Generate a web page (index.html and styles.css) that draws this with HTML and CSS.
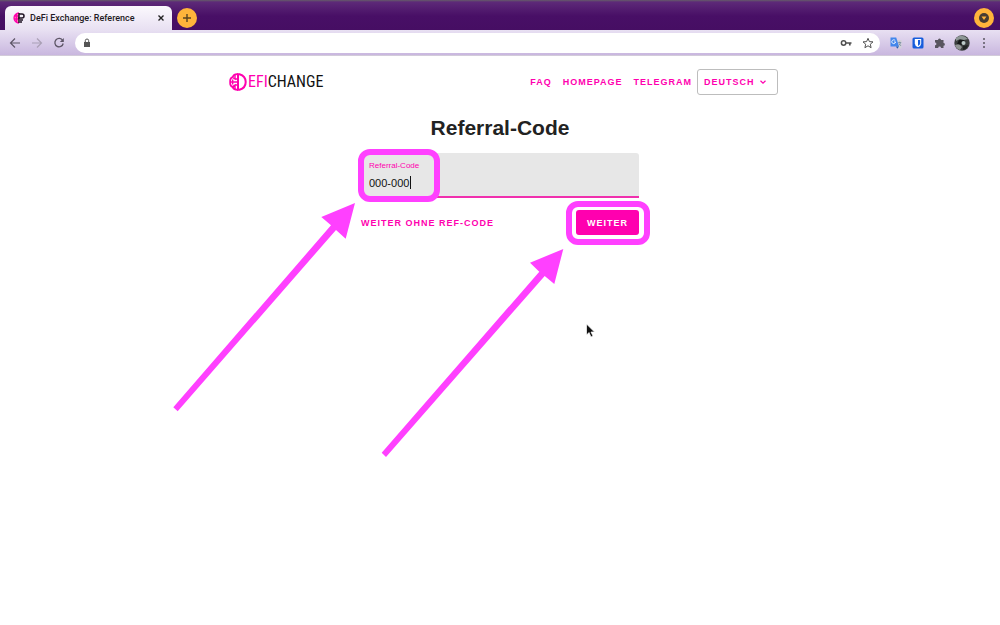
FILE: index.html
```html
<!DOCTYPE html>
<html lang="de">
<head>
<meta charset="utf-8">
<title>DeFi Exchange: Reference</title>
<link rel="stylesheet" href="styles.css">
</head>
<body>
<div class="browser">
  <div class="tabstrip">
    <div class="tab">
      <svg class="favicon" viewBox="0 0 12 12" width="12" height="12"><path d="M6 1A5 5 0 0 0 6 11Z" fill="#f8a"/><path d="M6 1A5 5 0 0 0 6 11M1 4h5M1 7h5M3.500 2v8" fill="none" stroke="#ff00af" stroke-width="1.300"/><path d="M6 1v10M6 2h3a2 2 0 0 1 0 4H5M7 8h3M7 10h2" fill="none" stroke="#211425" stroke-width="1.500"/></svg>
      <span class="tab-title">DeFi Exchange: Reference</span>
      <button class="tab-close" aria-label="Close tab"><svg viewBox="0 0 8 8" width="8" height="8"><path d="M1.500 1.500l5 5m0-5l-5 5" stroke="#222" stroke-width="1.400"/></svg></button>
    </div>
    <button class="round" aria-label="New tab"><svg viewBox="0 0 20 20" width="20" height="20"><path d="M6 10h8M10 6v8" stroke="#5b4320" stroke-width="1.400"/></svg></button>
    <button class="round profile-menu" aria-label="Tab search"><svg viewBox="0 0 20 20" width="20" height="20"><circle cx="10" cy="10" r="5" fill="#463c32"/><path d="M7.500 8.500h5L10 12Z" fill="#ffb43b"/></svg></button>
  </div>
  <div class="toolbar">
    <button class="tool" aria-label="Back"><svg viewBox="0 0 12 12" width="12" height="12"><path d="M11 6H2M6 1.500L1.500 6L6 10.500" fill="none" stroke="#5e5667" stroke-width="1.200"/></svg></button>
    <button class="tool" aria-label="Forward"><svg viewBox="0 0 12 12" width="12" height="12"><path d="M1 6h9M6 1.500L10.500 6L6 10.500" fill="none" stroke="#aaa0b5" stroke-width="1.200"/></svg></button>
    <button class="tool" aria-label="Reload"><svg viewBox="0 0 12 12" width="12" height="12"><path d="M9.700 3.500A4.200 4.200 0 1 0 10.200 6.500" fill="none" stroke="#5e5667" stroke-width="1.300"/><path d="M10.800 1v4h-4Z" fill="#5e5667"/></svg></button>
    <div class="omnibox">
      <svg viewBox="0 0 10 10" width="10" height="10"><path d="M2 4h6v5H2Z" fill="#555"/><path d="M3.300 4V2.700a1.700 1.700 0 0 1 3.400 0V4" fill="none" stroke="#555"/></svg>
      <input class="address" type="text" aria-label="Address">
      <button class="tool" aria-label="Passwords"><svg viewBox="0 0 12 12" width="12" height="12"><circle cx="3.600" cy="6" r="2.200" fill="none" stroke="#505050" stroke-width="1.500"/><path d="M6 6h5.500M9.800 6v2.500" stroke="#505050" stroke-width="1.700"/></svg></button>
      <button class="tool" aria-label="Bookmark"><svg viewBox="0 0 12 12" width="12" height="12"><path d="M6 1.300L7.400 4.600L11 4.900L8.300 7.200L9.100 10.700L6 8.800L2.900 10.700L3.700 7.200L1 4.900L4.600 4.600Z" fill="none" stroke="#505050"/></svg></button>
    </div>
    <div class="extensions">
      <button class="tool" aria-label="Translate"><svg viewBox="0 0 12 12" width="12" height="12"><path d="M5 3h6.500v8.500H7Z" fill="#d2d1d8"/><path d="M.5.500h5.700L9 9.500H.5Z" fill="#4387ec"/><path d="M6 9.500h3L7.200 11.700Z" fill="#2458b5"/><path d="M5.300 3.700A1.900 1.900 0 1 0 5.600 5H4" fill="none" stroke="#fff" stroke-width=".9"/><path d="M8.200 5.500h3M9.600 4.700v1M10.600 5.600Q10.300 7.500 8.600 8.500M9 6.500l2 2.500" fill="none" stroke="#71869a" stroke-width=".7"/></svg></button>
      <button class="tool" aria-label="Password vault"><svg viewBox="0 0 12 12" width="12" height="12"><rect x=".5" y=".5" width="11" height="11" rx="1.500" fill="#175ddc"/><path d="M2.800 2h6.400v4.500Q9.200 8.700 6 10.300Q2.800 8.700 2.800 6.500Z" fill="#fff"/><path d="M6 3h2.200v3.300Q8.200 7.700 6 9Z" fill="#175ddc"/></svg></button>
      <button class="tool" aria-label="Extensions"><svg viewBox="0 0 12 12" width="12" height="12"><path d="M1 3h3a1.500 1.500 0 1 1 3 0h2.500v3a1.400 1.400 0 1 1 0 2.800V11H7a1.400 1.400 0 0 0-2.800 0H1V8.300a1.400 1.400 0 0 0 0-2.800Z" fill="#5a5660"/></svg></button>
      <button class="tool avatar" aria-label="Profile"><svg viewBox="0 0 16 16" width="16" height="16"><circle cx="8" cy="8" r="7.700" fill="#3b3e3e"/><path d="M2 3Q8-2 14 4L10 5L6 4L2 6Z" fill="#8e9896"/><path d="M1 10L5 9L8 12L6 15Q2 14 1 10Z" fill="#929595"/><path d="M5 5h5l1 3l-3 2l-5-1Z" fill="#161818"/><circle cx="9.500" cy="8" r="2" fill="#bccac8"/><path d="M9 11l5-1q-1 4-5 5Z" fill="#202323"/></svg></button>
      <button class="tool" aria-label="Menu"><svg viewBox="0 0 12 12" width="12" height="12"><g fill="#5a5660"><circle cx="6" cy="2" r="1"/><circle cx="6" cy="6" r="1"/><circle cx="6" cy="10" r="1"/></g></svg></button>
    </div>
  </div>
</div>

<header class="site-header">
  <a class="logo" href="#" aria-label="DEFICHANGE">
    <svg viewBox="0 0 18 18" width="18" height="18"><g fill="none" stroke="#ff00af"><path d="M9 1V17M8 1.200H10.500Q16.700 3 16.700 9T10.500 16.800H8" stroke-width="2"/><path d="M9 1.200Q5 .8 3.600 4Q.8 5 1.200 9Q.8 13 3.600 14Q5 17 9 16.800" stroke-width="1.800"/><path d="M1 9H9M3.500 4.500L6 6V2M3.500 13.500L6 12V16M6 6H9M6 12H9M3.700 6.500V11.500" stroke-width="1.400"/></g></svg>
    <span class="logo-text"><b class="logo-accent">EFI</b>CHANGE</span>
  </a>
  <nav class="nav">
    <a href="#">FAQ</a>
    <a href="#">HOMEPAGE</a>
    <a href="#">TELEGRAM</a>
    <div class="language">
      <select aria-label="Sprache"><option>DEUTSCH</option></select>
      <svg class="chevron" viewBox="0 0 8 8" width="8" height="8"><path d="M1.500 2.800L4 5.200L6.500 2.800" fill="none" stroke="#ff00af" stroke-width="1.200"/></svg>
    </div>
  </nav>
</header>

<main class="content">
  <h1>Referral-Code</h1>
  <form class="form">
    <div class="field">
      <label for="code">Referral-Code</label>
      <input id="code" type="text" value="000-000">
      <span class="caret"></span>
      <span class="frame frame-field"></span>
    </div>
    <div class="actions">
      <button class="skip" type="button">WEITER OHNE REF-CODE</button>
      <div class="submit">
        <button class="next" type="button">WEITER</button>
        <span class="frame frame-next"></span>
      </div>
    </div>
    <svg class="arrows" viewBox="0 0 480 320" width="480" height="320">
      <g fill="#ff40ff"><path d="M12.300 254.300L170 72.300L160.300 64L194 50L184.700 85.700L175 77L16.700 258.300Z"/><path d="M220.700 299.700L378.300 118.700L369 109.700L402.300 96L393.300 131L383.700 123L225 304Z"/></g>
      <path d="M425.500 171v11l2.500-2.500l2 4.500l2-1l-2-4h3.500Z" fill="#111" stroke="#fff" stroke-width=".7"/>
    </svg>
  </form>
</main>
</body>
</html>
```
FILE: styles.css
```css
* { box-sizing: border-box; }
body { min-height: 100vh; margin: 0; background: #fff; color: #222; font-family: "Liberation Sans", Arial, sans-serif; }
button, input, select { margin: 0; padding: 0; border: 0; background: none; font-family: inherit; outline: 0; }
a { text-decoration: none; }
svg { display: block; flex: none; }

.browser { font-family: Roboto, sans-serif; }
.tabstrip { display: flex; align-items: flex-end; height: 30px; padding: 0 6px 0 5px; background: linear-gradient(#655c69 0, #5d2a78 2px, #480f66 16px, #460e63 100%); }
.tab { display: flex; align-items: center; gap: 5px; width: 167px; height: 24px; padding: 0 7px 0 8px; border-radius: 6px 6px 0 0; background: linear-gradient(#fbf9fd, #e8e0f2); }
.tab-title { flex: 1; font-size: 9px; font-weight: 500; white-space: nowrap; color: #1f1b24; }
.round { width: 20px; height: 20px; margin: 0 0 2px 5px; border-radius: 50%; background: #ffb43b; }
.profile-menu { margin-left: auto; }
.toolbar { display: flex; align-items: center; gap: 10px; height: 26px; padding: 0 10px 0 9px; border-bottom: 1px solid #d2cbd9; background: linear-gradient(#e8e0f2, #c9b7df); }
.omnibox { display: flex; flex: 1; align-items: center; gap: 10px; height: 20px; padding: 0 6px 0 7px; border-radius: 10px; background: #fff; }
.address { flex: 1; min-width: 0; font-size: 10px; }
.extensions { display: flex; align-items: center; gap: 10px; }
.avatar { margin: 0 -2px; }

.site-header { display: flex; align-items: center; justify-content: space-between; max-width: 556px; margin: 0 auto; padding: 13px 0 0 7px; }
.logo { display: flex; align-items: center; gap: 1px; color: #111; }
.logo-text { font: 16px/26px "Roboto Condensed", "Liberation Sans Narrow", "Liberation Sans", sans-serif; }
.logo-accent { font-weight: 400; color: #ff00af; }
.nav { display: flex; align-items: center; gap: 11px; }
.nav a, .language select, .skip, .next { font-size: 9px; font-weight: 700; letter-spacing: 1px; color: #ff00af; }
.language { position: relative; margin-left: -6px; }
.language select { display: block; width: 81px; height: 26px; padding: 0 6px; border: 1px solid #bdbdbd; border-radius: 3px; appearance: none; }
.chevron { position: absolute; top: 9px; right: 11px; }

.content { max-width: 278px; margin: 0 auto; }
h1 { margin: 20px 0 12px; font-size: 21px; line-height: 26px; text-align: center; }
.form { position: relative; }
.field { position: relative; display: flex; flex-direction: column; height: 45px; padding: 8px 8px 0; border-bottom: 2px solid #f030ae; border-radius: 3px 3px 0 0; background: #e7e7e7; }
.field label { font-size: 8px; line-height: 10px; color: #ff00af; }
.field input { font-size: 11px; line-height: 14px; margin-top: 5px; color: #111; }
.caret { position: absolute; top: 23px; left: 49px; width: 1px; height: 13px; background: #111; }
.frame { position: absolute; border: 6px solid #ff40ff; border-radius: 12px; }
.frame-field { top: -4px; left: -3px; width: 82px; height: 53px; }
.actions { display: flex; align-items: center; justify-content: space-between; padding-top: 12px; }
.submit { position: relative; }
.next { display: block; height: 25px; padding: 0 11px; border-radius: 3px; background: #ff00af; color: #fff; }
.frame-next { inset: -9px -11px -10px -10px; }
.arrows { position: absolute; top: 0; left: -200px; pointer-events: none; }
```
